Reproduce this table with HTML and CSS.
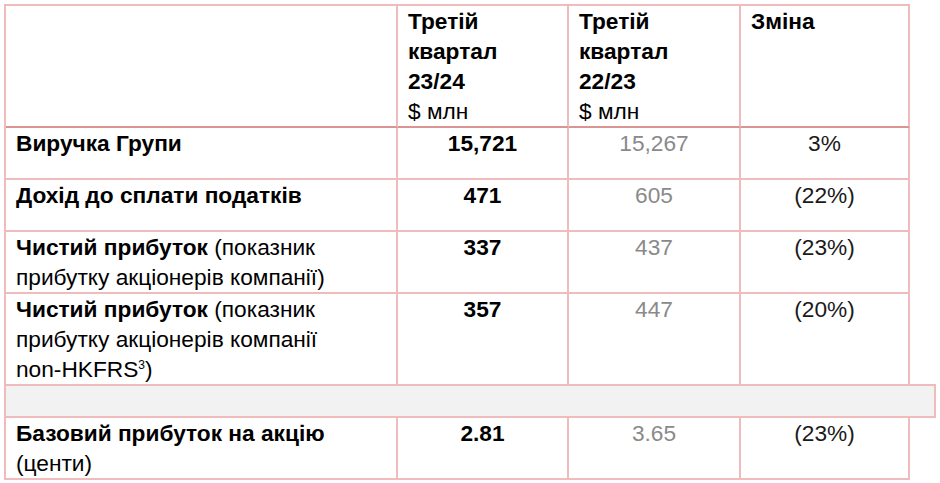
FILE: index.html
```html
<!DOCTYPE html>
<html lang="uk">
<head>
<meta charset="utf-8">
<title>Результати</title>
<link rel="stylesheet" href="styles.css">
</head>
<body>
<div class="table">
  <div class="row head">
    <div class="cell"></div>
    <div class="cell"><b>Третій<br>квартал<br>23/24</b><br>$ млн</div>
    <div class="cell"><b>Третій<br>квартал<br>22/23</b><br>$ млн</div>
    <div class="cell"><b>Зміна</b></div>
  </div>
  <div class="row">
    <div class="cell label"><b>Виручка Групи</b></div>
    <div class="cell num cur">15,721</div>
    <div class="cell num prev">15,267</div>
    <div class="cell num chg">3%</div>
  </div>
  <div class="row">
    <div class="cell label"><b>Дохід до сплати податків</b></div>
    <div class="cell num cur">471</div>
    <div class="cell num prev">605</div>
    <div class="cell num chg">(22%)</div>
  </div>
  <div class="row">
    <div class="cell label"><b>Чистий прибуток</b> (показник<br>прибутку акціонерів компанії)</div>
    <div class="cell num cur">337</div>
    <div class="cell num prev">437</div>
    <div class="cell num chg">(23%)</div>
  </div>
  <div class="row">
    <div class="cell label"><b>Чистий прибуток</b> (показник<br>прибутку акціонерів компанії<br>non-HKFRS<sup>3</sup>)</div>
    <div class="cell num cur">357</div>
    <div class="cell num prev">447</div>
    <div class="cell num chg">(20%)</div>
  </div>
  <div class="spacer"></div>
  <div class="row">
    <div class="cell label"><b>Базовий прибуток на акцію</b><br>(центи)</div>
    <div class="cell num cur">2.81</div>
    <div class="cell num prev">3.65</div>
    <div class="cell num chg">(23%)</div>
  </div>
</div>
</body>
</html>
```

FILE: styles.css
```css
html, body {
  margin: 0;
  padding: 0;
  background: #ffffff;
}

body {
  font-family: "Liberation Sans", Arial, sans-serif;
  font-size: 22.7px;
  line-height: 30px;
  color: #000000;
}

.table {
  margin: 4px 0 0 4px;
  width: 906px;
  border-top: 2px solid #eebcbc;
}

.row {
  display: grid;
  grid-template-columns: 392px 171px 172px 169px;
  border-left: 2px solid #eebcbc;
}

.cell {
  border-right: 2px solid #eebcbc;
  border-bottom: 2px solid #eebcbc;
  padding: 0 10px;
  min-height: 50px;
  white-space: nowrap;
}

.head .cell {
  border-bottom-color: #da9494;
  min-height: 120px;
}

.label {
  padding-left: 10px;
}

.num {
  text-align: center;
}

.cur {
  font-weight: bold;
  color: #000000;
}

.prev {
  color: #8a8a8a;
}

.chg {
  color: #1a1a1a;
}

sup {
  font-size: 12px;
  line-height: 0;
  vertical-align: 8px;
}

.spacer {
  margin-top: -2px;
  width: 928px;
  height: 30px;
  background: #f2f2f2;
  border: 2px solid #eebcbc;
}
```
